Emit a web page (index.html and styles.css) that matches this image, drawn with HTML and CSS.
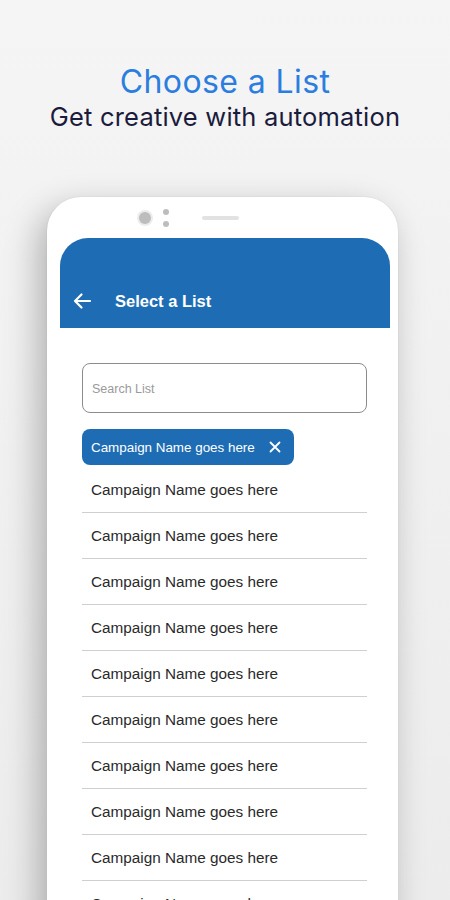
FILE: index.html
```html
<!DOCTYPE html>
<html>
<head>
<meta charset="utf-8">
<link rel="stylesheet" href="styles.css">
</head>
<body>
<div class="page">
  <header class="hero">
    <h1 class="hero-title">Choose a List</h1>
    <p class="hero-sub">Get creative with automation</p>
  </header>
  <div class="phone">
    <div class="phone-top">
      <span class="cam"></span>
      <span class="sensors"><i></i><i></i></span>
      <span class="speaker"></span>
    </div>
    <div class="screen">
      <div class="appbar">
        <svg class="back" width="20" height="18" viewBox="0 0 20 18"><path d="M18 9H3M9.5 2.5L3 9l6.5 6.5" fill="none" stroke="#fff" stroke-width="2.2" stroke-linecap="round" stroke-linejoin="round"/></svg>
        <span class="appbar-title">Select a List</span>
      </div>
      <div class="content">
        <div class="search">Search List</div>
        <div class="chip">
          <span>Campaign Name goes here</span>
          <svg width="12" height="12" viewBox="0 0 12 12"><path d="M1.5 1.5l9 9M10.5 1.5l-9 9" stroke="#fff" stroke-width="1.8" stroke-linecap="round"/></svg>
        </div>
        <ul class="list">
          <li>Campaign Name goes here</li>
          <li>Campaign Name goes here</li>
          <li>Campaign Name goes here</li>
          <li>Campaign Name goes here</li>
          <li>Campaign Name goes here</li>
          <li>Campaign Name goes here</li>
          <li>Campaign Name goes here</li>
          <li>Campaign Name goes here</li>
          <li>Campaign Name goes here</li>
          <li>Campaign Name goes here</li>
        </ul>
      </div>
    </div>
  </div>
</div>
</body>
</html>
```

FILE: styles.css
```css
html, body {
  margin: 0;
  padding: 0;
}
body {
  width: 450px;
  height: 900px;
  overflow: hidden;
  background: linear-gradient(180deg, #f5f5f5 0%, #f1f1f1 40%, #ececec 100%);
  font-family: "Liberation Sans", Arial, sans-serif;
}
.page {
  height: 900px;
  overflow: hidden;
}
.hero {
  text-align: center;
  padding-top: 63px;
}
.hero-title {
  margin: 0;
  font-family: Inter, "Noto Sans", sans-serif;
  font-weight: 400;
  font-size: 32px;
  line-height: 38px;
  color: #2b7ee0;
  letter-spacing: 0.4px;
}
.hero-sub {
  margin: 0;
  font-family: Inter, "Noto Sans", sans-serif;
  font-weight: 400;
  font-size: 25.5px;
  line-height: 32px;
  color: #1b1b3c;
  letter-spacing: 0.2px;
}
.phone {
  margin-top: 64px;
  margin-left: 47px;
  width: 351px;
  height: 760px;
  background: #fff;
  border-radius: 34px 34px 0 0;
  box-shadow: -8px 12px 34px rgba(0, 0, 0, 0.28), 0 0 0 1px #ececec;
}
.phone-top {
  height: 41px;
  display: flex;
  align-items: center;
  padding-left: 92px;
  box-sizing: border-box;
}
.cam {
  width: 12px;
  height: 12px;
  border-radius: 50%;
  background: #bdbdbd;
  box-shadow: 0 0 0 2px #ececec;
}
.sensors {
  display: flex;
  flex-direction: column;
  gap: 6px;
  margin-left: 12px;
}
.sensors i {
  width: 6px;
  height: 6px;
  border-radius: 50%;
  background: #bdbdbd;
}
.speaker {
  width: 37px;
  height: 4px;
  border-radius: 2px;
  background: #e2e2e2;
  margin-left: 33px;
}
.screen {
  margin-left: 13px;
  width: 330px;
}
.appbar {
  height: 90px;
  background: #1e6db4;
  border-radius: 28px 28px 0 0;
  display: flex;
  align-items: center;
  padding: 36px 0 0 12px;
  box-sizing: border-box;
}
.back {
  display: block;
}
.appbar-title {
  margin-left: 23px;
  color: #fff;
  font-weight: 700;
  font-size: 16.5px;
}
.content {
  padding: 35px 23px 0 22px;
}
.search {
  height: 50px;
  box-sizing: border-box;
  border: 1.2px solid #8c8c8c;
  border-radius: 8px;
  display: flex;
  align-items: center;
  padding: 2px 0 0 9px;
  font-size: 12.5px;
  color: #9a9a9a;
}
.chip {
  margin-top: 16px;
  width: 212px;
  height: 36px;
  box-sizing: border-box;
  background: #1e6db4;
  border-radius: 8px;
  display: flex;
  align-items: center;
  justify-content: space-between;
  padding: 0 13px 0 9px;
  color: #fff;
  font-size: 13.4px;
}
.list {
  list-style: none;
  margin: 2px 0 0;
  padding: 0;
}
.list li {
  height: 46px;
  box-sizing: border-box;
  border-bottom: 1px solid #cfcfcf;
  display: flex;
  align-items: center;
  padding-left: 9px;
  font-size: 15.3px;
  color: #2a2a2a;
}
```
